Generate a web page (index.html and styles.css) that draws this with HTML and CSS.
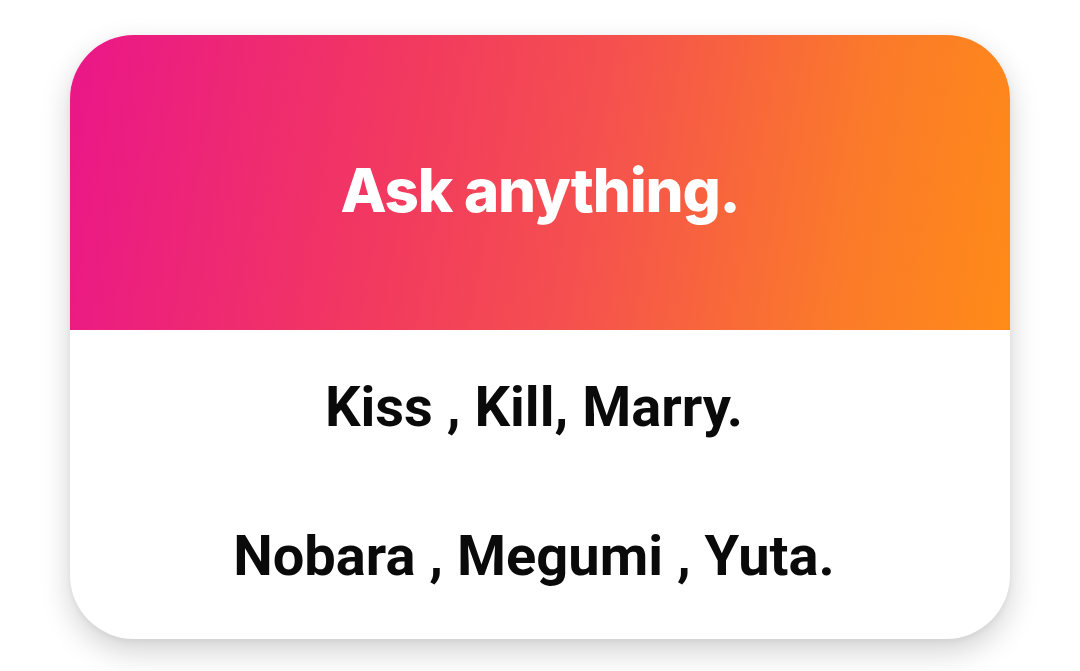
FILE: index.html
```html
<!DOCTYPE html>
<html lang="en">
<head>
<meta charset="utf-8">
<link rel="stylesheet" href="styles.css">
</head>
<body>
<div class="page">
  <div class="card">
    <div class="card-head">
      <h1 class="title">Ask anything.</h1>
    </div>
    <div class="card-body">
      <p class="line">Kiss , Kill, Marry.</p>
      <p class="line">Nobara , Megumi , Yuta.</p>
    </div>
  </div>
</div>
</body>
</html>
```
FILE: styles.css
```css
html, body {
  margin: 0;
  padding: 0;
  background: #ffffff;
}
.page {
  width: 1080px;
  height: 671px;
  padding: 35px 0 0 70px;
  box-sizing: border-box;
}
.card {
  width: 940px;
  height: 604px;
  border-radius: 64px;
  overflow: hidden;
  background: #ffffff;
  box-shadow: 0 12px 30px rgba(0, 0, 0, 0.18), 0 2px 6px rgba(0, 0, 0, 0.05);
  display: flex;
  flex-direction: column;
}
.card-head {
  height: 295px;
  background: linear-gradient(100deg, #ea1689 0%, #f2395f 35%, #f5504f 55%, #fb7a2a 82%, #ff8b18 100%);
  display: flex;
  align-items: center;
  justify-content: center;
}
.title {
  margin: 0;
  padding-top: 14px;
  color: #ffffff;
  font-family: Inter, "Noto Sans", sans-serif;
  font-weight: 800;
  font-size: 60px;
  letter-spacing: -1.2px;
  line-height: 70px;
}
.card-body {
  flex: 1;
  display: flex;
  flex-direction: column;
  align-items: center;
  padding: 44px 12px 0 0;
  gap: 83px;
}
.line {
  margin: 0;
  color: #0a0a0a;
  font-family: Roboto, "Liberation Sans", sans-serif;
  font-weight: 700;
  font-size: 56px;
  line-height: 66px;
}
```
